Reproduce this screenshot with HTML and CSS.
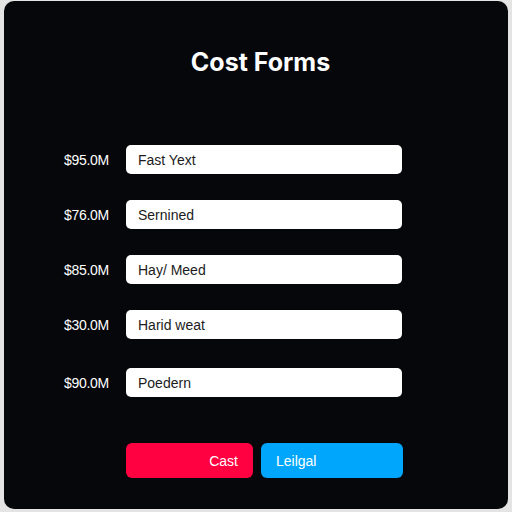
FILE: index.html
```html
<!DOCTYPE html>
<html lang="en">
<head>
  <meta charset="UTF-8">
  <meta name="viewport" content="width=device-width, initial-scale=1.0">
  <title>Cost Forms</title>
  <link rel="stylesheet" href="styles.css">
</head>
<body>
  <div class="card" role="main">
    <h1 class="title">Cost Forms</h1>

    <form class="cost-form">
      <div class="row">
        <label for="f1">$95.0M</label>
        <input id="f1" type="text" value="Fast Yext">
      </div>
      <div class="row">
        <label for="f2">$76.0M</label>
        <input id="f2" type="text" value="Sernined">
      </div>
      <div class="row">
        <label for="f3">$85.0M</label>
        <input id="f3" type="text" value="Hay/ Meed">
      </div>
      <div class="row">
        <label for="f4">$30.0M</label>
        <input id="f4" type="text" value="Harid weat">
      </div>
      <div class="row row-last">
        <label for="f5">$90.0M</label>
        <input id="f5" type="text" value="Poedern">
      </div>

      <div class="actions">
        <button type="button" class="btn btn-cancel">Cast</button>
        <button type="submit" class="btn btn-save">Leilgal</button>
      </div>
    </form>
  </div>
</body>
</html>
```

FILE: styles.css
```css
body {
  margin: 0;
  font-family: 'Liberation Sans', Arial, sans-serif;
  background-color: #e4e4e4;
  height: 512px;
  overflow: hidden;
}

.card {
  background-color: #05070b;
  margin: 1px 4px 0;
  height: 508px;
  border-radius: 10px;
  padding: 46px 0 0 60px;
  box-sizing: border-box;
}

.title {
  margin: 0 0 0 -51px;
  text-align: center;
  color: #fff;
  font-family: Inter, sans-serif;
  font-size: 25px;
  line-height: 30px;
  font-weight: 700;
}

.cost-form {
  margin-top: 68px;
  display: flex;
  flex-direction: column;
  gap: 26px;
}

.row {
  display: flex;
  align-items: center;
}

.row-last {
  margin-top: 3px;
}

.row label {
  width: 62px;
  color: #fff;
  font-size: 14px;
  letter-spacing: -0.3px;
}

.row input {
  width: 276px;
  height: 29px;
  box-sizing: border-box;
  border: none;
  border-radius: 5px;
  background-color: #fff;
  padding: 0 12px;
  font-family: inherit;
  font-size: 14px;
  color: #1c1c1c;
}

.actions {
  display: flex;
  gap: 8px;
  margin: 20px 0 0 62px;
}

.btn {
  height: 35px;
  border: none;
  border-radius: 6px;
  color: #fff;
  font-family: inherit;
  font-size: 14px;
  cursor: pointer;
}

.btn-cancel {
  width: 127px;
  background-color: #ff0040;
  text-align: right;
  padding: 0 15px;
}

.btn-save {
  width: 142px;
  background-color: #00a6fb;
  text-align: left;
  padding: 0 15px;
}
```
